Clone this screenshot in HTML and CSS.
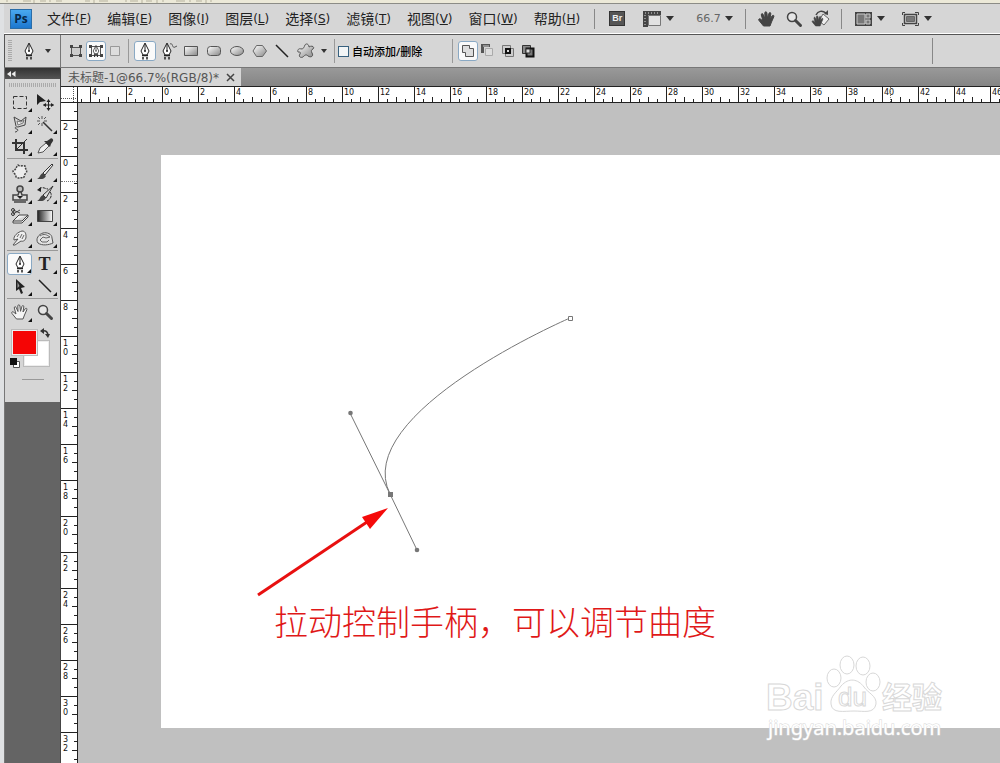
FILE: index.html
```html
<!DOCTYPE html>
<html lang="zh-CN">
<head>
  <meta charset="UTF-8">
  <title>未标题-1</title>
  <link rel="stylesheet" href="styles.css">
</head>
<body>
  <!-- shared shapes -->
  <svg class="defs" width="0" height="0">
    <defs>
      <linearGradient id="metal" x1="0" y1="0" x2="1" y2="1"><stop offset="0" stop-color="#fff"/><stop offset="1" stop-color="#888"/></linearGradient>
      <linearGradient id="fade"><stop offset="0" stop-color="#222"/><stop offset="1" stop-color="#fff"/></linearGradient>
      <symbol id="pen" viewBox="0 0 20 20">
        <path d="M10 2L6 10l2 4h4l2-4z" fill="#fff" stroke="#222"/>
        <path d="M10 3v7" stroke="#222"/><circle cx="10" cy="10" r="1" fill="#222"/>
        <path d="M7 14.500h6M8 16v2.500M12 16v2.500" stroke="#222" stroke-width="1.500"/>
      </symbol>
      <symbol id="hand" viewBox="0 0 20 20">
        <path d="M6.500 17L2 11.500c-1-1.500.8-2.400 1.800-1.200L6 12 4.300 6c-.3-1.600 1.500-1.900 1.900-.4L8 9.500 7.800 4c0-1.600 2-1.600 2.100 0l.6 5.300 1.500-5c.5-1.400 2.100-.8 1.800.6L13 10l2.200-3.200c.9-1.200 2.200-.3 1.600 1L14.500 13 13 17z"/>
      </symbol>
      <symbol id="lens" viewBox="0 0 20 20">
        <circle cx="8" cy="8" r="4.500" fill="#e6e6e6" stroke="#444" stroke-width="1.500"/>
        <path d="M11.500 11.500l5 5" stroke="#444" stroke-width="3" stroke-linecap="round"/>
      </symbol>
    </defs>
  </svg>

  <div class="behind">
    <svg width="220" height="3"><path d="M7 0v2M23 1h8M34 0v3M40 1h6M50 0v2M56 1h6M85 1h5M94 0v3M99 1h9M126 0v2M130 1h8M142 0v3M146 1h6M157 0v3M163 0v2M176 1h9M190 0v2M196 1h6M206 0v3M211 0v2" stroke="#b5b19e"/></svg>
  </div>

  <div class="app">
    <header class="menubar">
      <span class="logo">Ps</span>
      <nav class="menus">
        <button>文件<span>(<u>F</u>)</span></button>
        <button>编辑<span>(<u>E</u>)</span></button>
        <button>图像<span>(<u>I</u>)</span></button>
        <button>图层<span>(<u>L</u>)</span></button>
        <button>选择<span>(<u>S</u>)</span></button>
        <button>滤镜<span>(<u>T</u>)</span></button>
        <button>视图<span>(<u>V</u>)</span></button>
        <button>窗口<span>(<u>W</u>)</span></button>
        <button>帮助<span>(<u>H</u>)</span></button>
      </nav>
      <div class="quick">
        <button class="bridge" aria-label="Bridge"><span>Br</span></button>
        <button class="drop" aria-label="查看额外内容">
          <svg width="20" height="20"><path d="M1 2h18v4H6v12H1z" fill="#444"/><path d="M3 4h15M3 6v11" stroke="#ddd" stroke-dasharray="1 2"/><path d="M6.500 6.500h12v10h-12z" fill="#e2e2e2" stroke="#777"/></svg>
        </button>
        <label class="zoom"><select aria-label="缩放级别"><option>66.7</option></select></label>
      </div>
      <div class="quick views">
        <button aria-label="抓手"><svg width="20" height="20" fill="#444" stroke="#444"><use href="#hand"/></svg></button>
        <button aria-label="缩放"><svg width="20" height="20"><use href="#lens"/></svg></button>
        <button aria-label="旋转视图">
          <svg width="20" height="20"><path d="M12 5l6 5-5 6-5-4z" fill="#eee" stroke="#666"/><svg x="0" y="5" width="14" height="14" fill="#444" stroke="#444"><use href="#hand"/></svg><path d="M5 6c2-4 6-5 10-2" fill="none" stroke="#444" stroke-width="1.500"/><path d="M13 5l4 1V1z" fill="#444"/></svg>
        </button>
      </div>
      <div class="quick screens">
        <button class="drop" aria-label="排列文档">
          <svg width="20" height="20"><path d="M2 3h17v14H2z" fill="#444"/><path d="M4 5h8v10H4zM13 5h4v4h-4zM13 11h4v4h-4z" fill="#777" stroke="#ccc"/></svg>
        </button>
        <button class="drop" aria-label="屏幕模式">
          <svg width="20" height="20" fill="none" stroke="#444"><path d="M2.500 6V3.500H5M15 3.500h3.500V6M2.500 14v2.500H5M15 16.500h3.500V14"/><path d="M4.500 5.500h12v9h-12z" stroke-width="1.500"/><path d="M6.500 7.500h8v5h-8z" fill="#777" stroke="#666"/></svg>
        </button>
      </div>
    </header>

    <div class="options">
      <div class="preset">
        <i class="grip"></i>
        <button class="drop" aria-label="钢笔工具"><svg width="20" height="20"><use href="#pen"/></svg></button>
      </div>
      <div class="group modes">
        <button aria-label="形状图层"><svg width="20" height="20"><path d="M5.500 6.500h9v8h-9z" fill="#ccc" stroke="#555"/><path d="M4 4h3v3H4zM13 4h3v3h-3zM4 13h3v3H4zM13 13h3v3h-3z" fill="#444"/></svg></button>
        <button class="on" aria-label="路径"><svg width="20" height="20"><path d="M5.500 5.500h9v9h-9z" fill="none" stroke="#555"/><path d="M3 4h3v3H3zM14 4h3v3h-3zM3 13h3v3H3zM14 13h3v3h-3z" fill="#444"/><svg x="3" y="3" width="14" height="14"><use href="#pen"/></svg></svg></button>
        <button aria-label="填充像素"><svg width="20" height="20"><path d="M4.500 5.500h9v9h-9z" fill="#ddd" stroke="#999"/></svg></button>
      </div>
      <div class="group shapes">
        <button class="on" aria-label="钢笔"><svg width="20" height="20"><use href="#pen"/></svg></button>
        <button aria-label="自由钢笔"><svg width="20" height="20"><svg x="-1" width="20" height="20"><use href="#pen"/></svg><path d="M12 3c3-2 2 5 5 3l2-1" fill="none" stroke="#555"/></svg></button>
        <button aria-label="矩形"><svg width="20" height="20"><path d="M3.500 5.500h13v9h-13z" fill="url(#metal)" stroke="#555"/></svg></button>
        <button aria-label="圆角矩形"><svg width="20" height="20"><rect x="3.500" y="5.500" width="13" height="9" rx="3" fill="url(#metal)" stroke="#555"/></svg></button>
        <button aria-label="椭圆"><svg width="20" height="20"><ellipse cx="10" cy="10" rx="6.500" ry="4.500" fill="url(#metal)" stroke="#555"/></svg></button>
        <button aria-label="多边形"><svg width="20" height="20"><path d="M6.500 4.500h6l4 5.500-4 5.500h-6L3 10z" fill="url(#metal)" stroke="#666"/></svg></button>
        <button aria-label="直线"><svg width="20" height="20"><path d="M3 4l12 12" stroke="#222" stroke-width="1.500"/></svg></button>
        <button aria-label="自定形状"><svg width="20" height="20"><path d="M9 4c1-2 4-1 4 2 3-2 6 0 4 2-2 1-2 2-1 4 2 3-1 5-4 3-2-2-3-1-5 1-2 1-5 0-3-3 1-2 0-2-2-2-1-2 1-4 3-3 3 0 3-2 4-4z" fill="url(#metal)" stroke="#555"/></svg></button>
        <button class="more" aria-label="几何选项"></button>
      </div>
      <div class="group auto">
        <input type="checkbox" id="auto-add">
        <label for="auto-add">自动添加/删除</label>
      </div>
      <div class="group combine">
        <button class="on" aria-label="添加到路径区域"><svg width="20" height="20"><path d="M4.500 4.500h7v3h4v8h-8v-4h-3z" fill="#ddd" stroke="#555"/></svg></button>
        <button aria-label="从路径区域减去"><svg width="20" height="20"><path d="M7.500 7.500h7v7h-7z" fill="#ddd" stroke="#aaa"/><path d="M3 3h9v3H6v6H3z" fill="#555"/><path d="M5 5h6" stroke="#ccc"/></svg></button>
        <button aria-label="交叉路径区域"><svg width="20" height="20"><path d="M4.500 4.500h8v8h-8zM7.500 7.500h8v8h-8z" fill="#ccc" stroke="#777"/><path d="M8 8h4v4H8z" fill="#ddd" stroke="#111" stroke-width="2"/></svg></button>
        <button aria-label="重叠路径区域除外"><svg width="20" height="20"><path d="M4.500 4.500h8v8h-8z" fill="#888" stroke="#333"/><path d="M8.500 7.500h7v8h-7z" fill="#777" stroke="#111" stroke-width="2"/><path d="M8 8h4v4H8z" fill="#ddd" stroke="#333"/></svg></button>
      </div>
      <i class="end"></i>
    </div>

    <div class="workspace">
      <aside class="dock">
        <button class="collapse" aria-label="折叠面板"><svg width="9" height="6"><path d="M4 0v6L0 3zM8.500 0v6l-4-3z" fill="#eee"/></svg></button>
        <div class="toolbox">
          <i class="grip"></i>
          <div class="tools">
            <button class="sub" aria-label="矩形选框"><svg width="20" height="20"><path d="M3.500 4.500h13v12h-13z" fill="none" stroke="#333" stroke-dasharray="4 2"/></svg></button>
            <button aria-label="移动"><svg width="20" height="20"><path d="M2 2v11l3-3 6-1z" fill="#222"/><path d="M13.500 8v10M8.500 13h10" stroke="#222"/><path d="M13.500 7l2 3h-4zM13.500 19l2-3h-4zM8 13l3-2v4zM19 13l-3-2v4z" fill="#222"/></svg></button>
            <button class="sub" aria-label="套索"><svg width="20" height="20"><path d="M6 12L4 3l7 4 5-4-1 8-7 2c-3-1-4 2-1 2 2 1 0 3-2 3" fill="none" stroke="#444"/><path d="M7 7l1 4 5-2 1-3-3 2z" fill="#eee" stroke="#777"/></svg></button>
            <button class="sub" aria-label="魔棒"><svg width="20" height="20"><path d="M8 8l9 9" stroke="#333" stroke-width="1.500"/><path d="M7 2v3M7 9v3M2 7h3M9 7h3M3 3l2 2M11 3L9 5M3 11l2-2" stroke="#555"/></svg></button>
            <button class="sub" aria-label="裁剪"><svg width="20" height="20" fill="none" stroke="#333" stroke-width="2"><path d="M6 3v11h12M2 7h12v11"/><path d="M17 3L6 14" stroke-width="1"/></svg></button>
            <button class="sub" aria-label="吸管"><svg width="20" height="20"><path d="M3 17l2-5 6-5 3 3-6 6z" fill="#eee" stroke="#555"/><path d="M9 5l6 6 1-3 2-3c1-2-2-4-3-2l-3 2z" fill="#333"/></svg></button>
          </div>
          <div class="tools">
            <button class="sub" aria-label="修补"><svg width="20" height="20"><path d="M8 3c2 2 5 0 7 1 0 3 3 5 1 7-2 1-1 4-3 5-2-1-4 1-7-1 0-3-3-4-3-6 3-1 3-4 5-6z" fill="#ededed" stroke="#444" stroke-width="1.500" stroke-dasharray="2 1"/></svg></button>
            <button class="sub" aria-label="画笔"><svg width="20" height="20"><path d="M8 11L17 2l1 1-8 10z" fill="#eee" stroke="#333"/><path d="M8 11l3 3c-2 4-5 3-9 3 3-1 3-5 6-6z" fill="#444"/></svg></button>
            <button class="sub" aria-label="仿制图章"><svg width="20" height="20"><circle cx="10" cy="5" r="3" fill="#bbb" stroke="#444" stroke-width="1.500"/><path d="M9 8h2l1 3h5v5H3v-5h5z" fill="#ddd" stroke="#444" stroke-width="1.500"/><path d="M4 18h12" stroke="#444" stroke-width="1.500"/><path d="M7 12h6l-3 3z" fill="#222"/></svg></button>
            <button class="sub" aria-label="历史记录画笔"><svg width="20" height="20"><path d="M8 11L18 2l-7 12z" fill="#ddd" stroke="#333"/><path d="M8 11l3 3c-2 4-5 3-9 3 3-1 3-5 6-6z" fill="#444"/><path d="M4 5c4-3 6 0 9 0M15 8c3 3 0 8-3 9" fill="none" stroke="#222" stroke-dasharray="3 1"/><path d="M2 6l4-3v5z" fill="#222"/></svg></button>
            <button class="sub" aria-label="橡皮擦"><svg width="20" height="20"><path d="M3 15l6-6h9l-6 6zM3 15v2h9l6-6V9" fill="#eee" stroke="#444"/><path d="M3 4l7 3M3 8l7-4" stroke="#444"/><circle cx="3" cy="4" r="1.500" fill="none" stroke="#333"/><circle cx="3" cy="8" r="1.500" fill="none" stroke="#333"/></svg></button>
            <button class="sub" aria-label="渐变"><svg width="20" height="20"><path d="M2.500 4.500h15v11h-15z" fill="url(#fade)" stroke="#444"/></svg></button>
            <button class="sub" aria-label="涂抹"><svg width="20" height="20"><path d="M3 17l5-6-4 1c-1-4 4-8 8-9 4 0 4 4 4 6 0 3-3 5-5 4l-6 4z" fill="#eee" stroke="#555"/><path d="M9 6l-2 3M12 6l-2 4M14 7l-2 4" stroke="#666"/></svg></button>
            <button class="sub" aria-label="海绵"><svg width="20" height="20"><path d="M3 15c-3-4 1-9 5-10s9 1 9 5l1 5c-4 2-11 3-15 0z" fill="#e2e2e2" stroke="#555"/><path d="M5 8c4-3 7-1 10 1l-4 1-3-1-3 3 2 2h5l2-2" fill="none" stroke="#666"/></svg></button>
          </div>
          <div class="tools">
            <button class="sub on" aria-label="钢笔"><svg width="20" height="20"><use href="#pen"/></svg></button>
            <button class="sub type" aria-label="文字">T</button>
            <button class="sub" aria-label="路径选择"><svg width="20" height="20"><path d="M6 3v12l3-2 2 5 2-1-2-5 4-1z" fill="#222"/><path d="M7.500 6v6l2-2z" fill="#999"/></svg></button>
            <button class="sub" aria-label="直线"><svg width="20" height="20"><path d="M4 4l12 12" stroke="#222" stroke-width="1.500"/></svg></button>
          </div>
          <div class="tools">
            <button class="sub" aria-label="抓手"><svg width="20" height="20" fill="#f4f4f4" stroke="#555"><use href="#hand"/></svg></button>
            <button aria-label="缩放"><svg width="20" height="20"><use href="#lens"/></svg></button>
          </div>
          <div class="colors">
            <button class="bg" aria-label="背景色"></button>
            <button class="fg" aria-label="前景色"></button>
            <svg class="swap" width="10" height="10"><path d="M2 3c4-1 6 1 6 5" fill="none" stroke="#333" stroke-width="1.500"/><path d="M0 3l4-3v6zM5 6h5L8 10z" fill="#333"/></svg>
            <svg class="reset" width="10" height="10"><path d="M3.500 3.500h6v6h-6z" fill="#fff" stroke="#555"/><path d="M0 0h7v7H0z" fill="#111"/></svg>
          </div>
          <i class="foot"></i>
        </div>
      </aside>

      <main class="editor">
        <div class="tabs">
          <div class="tab"><span>未标题<span class="latin">-1@66.7%(RGB/8)*</span></span><button aria-label="关闭"><svg width="7" height="7"><path d="M0 0l7 7M7 0L0 7" stroke="#444" stroke-width="1.500"/></svg></button></div>
        </div>
        <div class="corner"></div>
        <div class="ruler across">
          <span>4</span><span>2</span><span>0</span><span>2</span><span>4</span><span>6</span><span>8</span><span>10</span><span>12</span><span>14</span><span>16</span><span>18</span><span>20</span><span>22</span><span>24</span><span>26</span><span>28</span><span>30</span><span>32</span><span>34</span><span>36</span><span>38</span><span>40</span><span>42</span><span>44</span><span>46</span><i class="mark"></i>
        </div>
        <div class="ruler down">
          <span>2</span><span>0</span><span>2</span><span>4</span><span>6</span><span>8</span><span>10</span><span>12</span><span>14</span><span>16</span><span>18</span><span>20</span><span>22</span><span>24</span><span>26</span><span>28</span><span>30</span><span>32</span><i class="mark"></i>
        </div>
        <div class="canvas">
          <div class="sheet">
            <svg class="path" width="560" height="460">
              <g fill="none" stroke="#777">
                <path d="M229 339C189 258 409 163 409 163"/>
                <path d="M189 258L229 339L256 395"/>
              </g>
              <g fill="#777">
                <path d="M227 337h5v5h-5z"/>
                <circle cx="189.500" cy="258" r="2.300"/>
                <circle cx="256" cy="395" r="2.300"/>
              </g>
              <path d="M407.500 161.500h4v4h-4z" fill="#fff" stroke="#777"/>
              <path d="M97 440L206 367" stroke="#e81010" stroke-width="3"/>
              <path d="M227 353L201 362l8 12z" fill="#f50a0a"/>
            </svg>
            <p class="note">拉动控制手柄，可以调节曲度</p>
          </div>
          <svg class="watermark" width="190" height="90">
            <g fill="#fff" stroke="#d8d8d8">
              <ellipse cx="84" cy="23" rx="7" ry="9"/>
              <ellipse cx="97" cy="10" rx="7" ry="9"/>
              <ellipse cx="113" cy="11" rx="7" ry="9"/>
              <ellipse cx="123" cy="27" rx="7" ry="9"/>
              <path d="M91 31c8-9 17-7 23 1 4 6 13 9 12 17-2 10-12 7-22 7s-22 3-23-7c-1-8 6-12 10-18z"/>
              <text class="bai" x="16" y="55">Bai</text>
              <text class="du" x="88" y="51">du</text>
              <text class="exp" x="132" y="53">经验</text>
            </g>
            <text class="site" x="18" y="80">jingyan.baidu.com</text>
          </svg>
        </div>
      </main>
    </div>
  </div>
</body>
</html>
```

FILE: styles.css
```css
* { box-sizing: border-box; }
body {
  margin: 0;
  height: 100vh;
  display: flex;
  flex-direction: column;
  overflow: hidden;
  background: #dfe1e3;
  font-family: "Noto Sans", "Noto Sans CJK SC", sans-serif;
  font-size: 12px;
  color: #222;
}
button { padding: 0; border: 0; background: none; font: inherit; color: inherit; display: flex; align-items: center; justify-content: center; }
svg { display: block; flex: none; overflow: visible; }
.defs { position: absolute; }

.behind { height: 4px; background: #ece9d8; border-bottom: 1px solid #8c8c86; }
.behind svg { overflow: hidden; }
.app { flex: 1; min-height: 0; display: flex; flex-direction: column; padding-left: 4px; }

/* menu bar */
.menubar { height: 30px; display: flex; align-items: center; background: #d6d6d6; border-bottom: 1px solid #fff; }
.logo {
  width: 22px; height: 20px; margin-left: 6px;
  background: linear-gradient(#4aa9f0, #1c77cf);
  border: 1px solid #2a6da8;
  font: bold 12px/18px "Open Sans", sans-serif;
  color: #06284a; text-align: center;
}
.menus { display: flex; gap: 16px; margin-left: 15px; }
.menus button { font-size: 14px; line-height: 20px; white-space: nowrap; }
.menus span { font-family: "DejaVu Sans", sans-serif; font-size: 12px; }
.quick { display: flex; align-items: center; height: 20px; margin-left: 14px; padding-left: 12px; border-left: 1px solid #888; }
.bridge { width: 20px; margin-right: 15px; }
.bridge span { width: 16px; height: 15px; background: #555; border: 1px solid #333; color: #eee; font: bold 9px/13px "Liberation Sans", sans-serif; }
.drop::after, .more::after, .zoom::after { content: ""; border: 4px solid transparent; border-top: 5px solid #333; border-bottom: 0; }
.drop { gap: 4px; }
.zoom { display: flex; align-items: center; margin-left: 22px; }
.zoom select { appearance: none; border: 0; padding: 0; width: 29px; background: none; font: 11px "DejaVu Sans", sans-serif; color: #666; }
.views { gap: 7px; margin-left: 12px; padding-left: 11px; }
.views button { width: 20px; }
.screens { gap: 15px; margin-left: 10px; padding-left: 11px; }

/* options bar */
.options { height: 34px; display: flex; align-items: center; background: #d6d6d6; border: 1px solid #555; border-right: 0; border-bottom-color: #777; }
.grip { display: block; background: repeating-linear-gradient(#aaa 0 1px, transparent 1px 2px); }
.preset { display: flex; align-items: center; height: 32px; width: 56px; padding-left: 3px; border-right: 1px solid #777; }
.preset .grip { width: 4px; height: 22px; margin-right: 7px; }
.options .drop { gap: 6px; }
.options .drop::after, .more::after { border-width: 4px 3px 0; }
.group { display: flex; align-items: center; height: 24px; border-right: 1px solid #999; }
.modes { width: 68px; padding-left: 5px; }
.group button { width: 20px; height: 20px; }
.group .on, .tools .on { background: #fafafa; border: 1px solid #8aa9c4; border-radius: 3px; }
.shapes { gap: 1px; width: 206px; padding-left: 5px; }
.shapes button { width: 22px; }
.shapes .more { width: 12px; }
.auto { width: 118px; gap: 3px; padding-left: 3px; font-size: 11px; font-weight: 500; color: #000; white-space: nowrap; }
.auto input { appearance: none; width: 11px; height: 11px; margin: 0; background: #f2f5f6; border: 1px solid #38617f; }
.combine { flex: 1; padding-left: 5px; border: 0; }
.end { width: 68px; height: 26px; border-left: 1px solid #888; }

/* left dock */
.workspace { flex: 1; min-height: 0; display: flex; }
.dock { flex: none; width: 57px; background: #646464; border-left: 1px solid #777; border-right: 1px solid #444; }
.collapse { width: 100%; height: 11px; justify-content: flex-start; padding-left: 2px; background: linear-gradient(#333, #555); }
.toolbox { padding: 4px 2px 0; height: 323px; background: #d6d6d6; }
.toolbox .grip { height: 4px; margin: 0 2px 4px; background: repeating-linear-gradient(90deg, #aaa 0 1px, transparent 1px 2px); }
.tools { display: grid; grid-template-columns: 25px 25px; grid-auto-rows: 22px; padding: 0 0 1px; margin-bottom: 2px; border-bottom: 1px solid #999; }
.tools button { position: relative; }
.tools:nth-of-type(4) { border: 0; }
.sub::after { content: ""; position: absolute; right: 0; bottom: 1px; border: 2px solid; border-color: transparent #111 #111 transparent; }
.type { font: bold 18px "Liberation Serif", serif; }
.colors { position: relative; height: 42px; }
.fg, .bg { position: absolute; width: 25px; height: 25px; border: 1px solid #eee; outline: 1px solid #bbb; }
.fg { left: 5px; top: 4px; background: #f50505; }
.bg { left: 17px; top: 15px; background: #fff; }
.swap { position: absolute; left: 33px; top: 2px; }
.reset { position: absolute; left: 3px; top: 32px; }
.foot { display: block; width: 22px; margin: 11px auto 0; border-top: 1px solid #999; }

/* document window */
.editor { flex: 1; min-width: 0; display: grid; grid-template: 18px 17px 1fr / 17px 1fr; }
.tabs { grid-column: 1 / 3; background: linear-gradient(#999, #858585); display: flex; }
.tab { display: flex; align-items: center; gap: 8px; padding: 0 7px; background: #d6d6d6; color: #555; white-space: nowrap; }
.latin { font-family: "DejaVu Sans", sans-serif; }
.corner {
  border: solid #222; border-width: 1px 1px 1px 0;
  background:
    repeating-linear-gradient(#555 0 1px, transparent 1px 2px) 12px 0 / 1px 100% no-repeat,
    repeating-linear-gradient(90deg, #555 0 1px, transparent 1px 2px) 0 11px / 100% 1px no-repeat,
    #fff;
}
.ruler { position: relative; display: flex; overflow: hidden; background-color: #fff; font: 8px/9px "DejaVu Sans", sans-serif; color: #111; }
.ruler span { flex: none; }
.across {
  padding-left: 12px;
  border: solid #222; border-width: 1px 0;
  background-image: linear-gradient(90deg, #222 1px, transparent 1px), linear-gradient(90deg, #222 1px, transparent 1px), linear-gradient(90deg, #222 1px, transparent 1px);
  background-size: 36px 15px, 18px 5px, 9px 3px;
  background-position: 12px 0, 12px 100%, 12px 100%;
  background-repeat: repeat-x;
}
.across span { width: 36px; padding: 1px 0 0 2px; }
.down {
  flex-direction: column;
  padding-top: 17px;
  border-right: 1px solid #222;
  background-image: linear-gradient(#222 1px, transparent 1px), linear-gradient(#222 1px, transparent 1px), linear-gradient(#222 1px, transparent 1px);
  background-size: 16px 36px, 5px 18px, 3px 9px;
  background-position: 0 17px, 100% 17px, 100% 17px;
  background-repeat: repeat-y;
}
.down span { height: 36px; width: 8px; padding: 3px 0 0 2px; word-break: break-all; }
.across .mark { position: absolute; left: 812px; height: 15px; border-left: 1px dotted #777; }
.down .mark { position: absolute; top: 78px; width: 16px; border-top: 1px dotted #777; }

.canvas { position: relative; display: flex; overflow: hidden; background: #c0c0c0; }
.sheet { position: relative; flex: 1; margin: 52px 0 35px 83px; background: #fff; }
.path { position: absolute; left: 0; top: 0; }
.note { position: absolute; left: 113px; top: 446px; margin: 0; font: 300 34px/40px "Noto Sans CJK SC", serif; color: #e01818; white-space: nowrap; }

.watermark { position: absolute; right: 60px; bottom: 18px; }
.bai { font: bold 37px "Liberation Sans", sans-serif; }
.du { font: 26px "Liberation Sans", sans-serif; }
.exp { font: bold 30px "Noto Sans CJK SC", sans-serif; }
.site { font: 20px "Noto Sans", sans-serif; fill: #fff; paint-order: stroke; stroke: #d8d8d8; stroke-width: 1px; }
```
